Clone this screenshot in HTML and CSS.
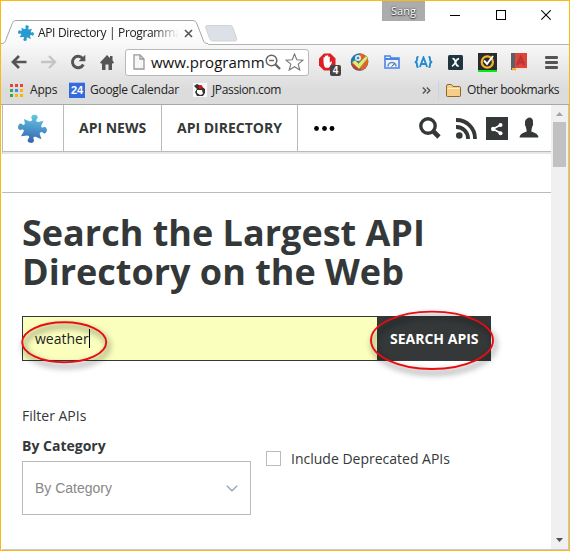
FILE: index.html
```html
<!DOCTYPE html>
<html lang="en">
<head>
<meta charset="utf-8">
<title>API Directory | ProgrammableWeb</title>
<link rel="stylesheet" href="styles.css">
</head>
<body>
<svg width="0" height="0" class="defs">
  <defs>
    <linearGradient id="pz" x1="0" y1="0" x2="0" y2="1"><stop offset="0" stop-color="#63c8e4"/><stop offset="1" stop-color="#3562b0"/></linearGradient>
    <linearGradient id="tabfill" x1="0" y1="0" x2="0" y2="1"><stop offset="0" stop-color="#fff"/><stop offset="1" stop-color="#f9f9f9"/></linearGradient>
    <symbol id="puzzle" viewBox="0 0 28 28"><path transform="rotate(8 14 14)" d="M4.500 6L10 7.500Q13 7.500 12.500 5.500C10.500 3.500 11 .5 14.500 .5C18 .5 18 3.500 16.500 5Q16 7 18.500 7L23.500 5L22 10Q22 12.500 24 11.500C26 10 28 11.500 28 14C28 17 25.500 18 24 16.300Q22 15.500 21.500 18L24 23L18 21.500Q15.500 21.500 16.300 23.500C18 26 16.500 28 14 28C11 28 10 25.500 11.800 23.500Q12.500 21.500 10 21.500L4 23L6 18Q6 15.500 4 16.500C2 18 0 17 0 14C0 11 2.500 10 4 11.500Q6 12.500 6 10Z" fill="url(#pz)"/></symbol>
    <symbol id="puzzle-small" viewBox="0 0 28 28"><path transform="rotate(8 14 14)" d="M4.500 6L10 7.500Q13 7.500 12.500 5.500C10.500 3.500 11 .5 14.500 .5C18 .5 18 3.500 16.500 5Q16 7 18.500 7L23.500 5L22 10Q22 12.500 24 11.500C26 10 28 11.500 28 14C28 17 25.500 18 24 16.300Q22 15.500 21.500 18L24 23L18 21.500Q15.500 21.500 16.300 23.500C18 26 16.500 28 14 28C11 28 10 25.500 11.800 23.500Q12.500 21.500 10 21.500L4 23L6 18Q6 15.500 4 16.500C2 18 0 17 0 14C0 11 2.500 10 4 11.500Q6 12.500 6 10Z" fill="#259bd0"/></symbol>
  </defs>
</svg>
<div class="window">
  <header class="titlebar">
    <div class="tab">
      <svg class="tab-shape" width="208" height="25" viewBox="0 0 208 25"><path d="M0 23.500 C4 23.500 4 22 5 19.500 L11 4 C12 1 13 .5 16 .5 H191 C194 .5 195 1.500 196 4 L202 19.500 C203 22.500 204 23.500 207 23.500 V25 H0Z" fill="url(#tabfill)"/><path d="M0 23.500 C4 23.500 4 22 5 19.500 L11 4 C12 1 13 .5 16 .5 H191 C194 .5 195 1.500 196 4 L202 19.500 C203 22.500 204 23.500 207 23.500" fill="none" stroke="#a5a5a5"/></svg>
      <svg class="favicon" width="16" height="16"><use href="#puzzle-small"/></svg>
      <span class="tab-title">API Directory | Programma</span>
      <svg class="tab-close" width="9" height="9" viewBox="0 0 9 9"><path d="M1 1 L8 8 M8 1 L1 8" stroke="#555" stroke-width="1.600"/></svg>
    </div>
    <svg class="newtab" width="33" height="17" viewBox="0 0 33 17"><path d="M3 .5 H25 C27 .5 27.500 1.500 28 3 L31.500 13 C32 15 31.500 16 29.500 16 H8 C6 16 5 15 4.500 13 L.8 3 C.3 1 1 .5 3 .5Z" fill="#dce1e8" stroke="#d0d3d8"/></svg>
    <span class="profile">Sang</span>
    <div class="controls">
      <svg width="10" height="11" viewBox="0 0 10 11"><path d="M0 5.500H10" stroke="#000"/></svg>
      <svg width="10" height="11" viewBox="0 0 10 11"><rect x=".5" y=".5" width="9" height="9" fill="none" stroke="#000"/></svg>
      <svg width="10" height="11" viewBox="0 0 10 11"><path d="M.3 .3L9.700 9.700M9.700 .3L.3 9.700" stroke="#000" stroke-width="1.100"/></svg>
    </div>
  </header>
  <section class="chrome">
    <div class="toolbar">
      <svg class="back" width="16" height="14" viewBox="0 0 16 14"><path d="M15.500 7H2.500M8 1L2 7L8 13" fill="none" stroke="#555" stroke-width="2.700"/></svg>
      <svg class="fwd" width="16" height="14" viewBox="0 0 16 14"><path d="M0 7H13.500M8 1L14 7L8 13" fill="none" stroke="#c4c4c4" stroke-width="2.300"/></svg>
      <svg class="reload" width="16" height="16" viewBox="0 0 16 16"><path d="M12.500 4.300A5.700 5.700 0 1 0 13.300 10.500" fill="none" stroke="#555" stroke-width="2.900"/><path d="M15.300 .8V7.300H8.500Z" fill="#555"/></svg>
      <svg class="home" width="14" height="15" viewBox="0 0 14 15"><path d="M7 0L10 3V1H12.500V5.500L14 7.500L13 8.500H12V15H8.500V9.500H5.500V15H2V8.500H1L0 7.500Z" fill="#555"/></svg>
      <div class="omnibox">
        <svg width="12" height="16" viewBox="0 0 12 16"><path d="M1 .8H7L11 5V15H1Z M7 1V5H11" fill="#f6f6f6" stroke="#999" stroke-width="1.300"/></svg>
        <span class="url">www.programm</span>
        <svg class="zoomout" width="16" height="16" viewBox="0 0 16 16"><circle cx="6.500" cy="6.500" r="5.300" fill="none" stroke="#666" stroke-width="1.500"/><path d="M4 6.500H9" stroke="#666" stroke-width="1.400"/><path d="M10.500 10.500L15 15" stroke="#666" stroke-width="2.400"/></svg>
        <svg class="star" width="19" height="18" viewBox="0 0 19 18"><path d="M9.500 1L11.800 6.800L18 7.200L13.200 11.100L14.800 17L9.500 13.700L4.200 17L5.800 11.100L1 7.200L7.200 6.800Z" fill="#fff" stroke="#777" stroke-width="1.100"/></svg>
      </div>
      <div class="ext hand">
        <svg width="19" height="18" viewBox="0 0 19 18"><path d="M6 .5H12.500L17.500 5.500V12.500L12.500 17.500H6L1 12.500V5.500Z" fill="#e11d24"/><path d="M5.500 8V4.500Q6.200 3.700 7 4.500V8V3Q7.800 2.200 8.600 3V8V2.500Q9.400 1.800 10.200 2.500V8V4Q11 3.200 11.800 4V10Q13 8 14.200 8.800Q13 13 10.800 14.800H7.500Q5.500 13 5.500 8Z" fill="#fff"/></svg>
        <span class="badge">4</span>
      </div>
      <svg class="check" width="20" height="18" viewBox="0 0 20 18"><circle cx="9.500" cy="9" r="8.800" fill="#2577b0"/><path d="M9.500 .2A8.800 8.800 0 0 1 18.300 9Q17 16 11 17.600L9 9Z" fill="#e86023"/><path d="M1 11Q4 18 11 17.500L5 9Z" fill="#c9382a"/><circle cx="8" cy="5" r="3" fill="#d5eefa"/><circle cx="8" cy="5" r="1.300" fill="#3d88ba"/><path d="M2 9.500L5 7L8.500 10.500L16 3L18 5L9 16Z" fill="#dceb7c" stroke="#8ea445" stroke-width=".7"/></svg>
      <svg class="gauge" width="16" height="14" viewBox="0 0 16 14"><path d="M1 13V1H6L7 3H15V13Z" fill="#edf4ff" stroke="#4a85e5" stroke-width="1.600"/><path d="M1 4H15" stroke="#4a85e5" stroke-width="2"/><path d="M4 11.500A4 4 0 0 1 12 11.500" fill="none" stroke="#7890b0" stroke-width="1.700"/><path d="M7.500 11.500L11 8.500" stroke="#294d80"/></svg>
      <svg class="angle" width="19" height="12" viewBox="0 0 19 12"><path d="M4.500 .8Q3 .8 3 2.500V4Q3 5.500 1 6Q3 6.500 3 8V9.500Q3 11.200 4.500 11.200M14.500 .8Q16 .8 16 2.500V4Q16 5.500 18 6Q16 6.500 16 8V9.500Q16 11.200 14.500 11.200M5.900 11L9.500 1.500L13.100 11M7 8H12" fill="none" stroke="#248bd0" stroke-width="1.900"/></svg>
      <svg class="xext" width="15" height="15" viewBox="0 0 15 15"><rect width="15" height="15" rx="1.500" fill="#213442"/><path d="M4.500 3.700Q6.500 3.200 7.500 7Q8.300 11.300 10.800 11M11 3.700Q9 4 7.500 7Q6 10.500 4 11.300" fill="none" stroke="#fff" stroke-width="1.700"/></svg>
      <svg class="norton" width="19" height="19" viewBox="0 0 19 19"><path fill="#2b2b2b" d="M0 0H19V17H0Z"/><path fill="#00ef13" d="M0 17H19V19H0Z"/><circle cx="9.300" cy="9" r="5.600" fill="none" stroke="#f7b52f" stroke-width="2.200"/><path d="M6 7.500L9 11L15 3" fill="none" stroke="#fff" stroke-width="2"/></svg>
      <svg class="book" width="17" height="18" viewBox="0 0 17 18"><path d="M0 0H16V16H0Z" fill="#dc453b"/><path d="M0 0H4V17H0Z" fill="#5c6066"/><path d="M6 12L9.700 4L13.300 12M7.500 9.500H12" fill="none" stroke="#b93430" stroke-width="2"/><path d="M4 15H16V17H4Z" fill="#efddd6"/><path d="M1 15H5V18L3 16.500L1 18Z" fill="#f8b62c"/></svg>
      <svg class="menu" width="13" height="13" viewBox="0 0 13 13"><path d="M1.300 1.500H11.700M1.300 6.500H11.700M1.300 11.500H11.700" stroke="#555" stroke-width="2.900" stroke-linecap="round"/></svg>
    </div>
    <div class="bookmarks">
      <svg class="apps" width="13" height="13" viewBox="0 0 13 13"><path d="M0 0h3v3H0zM5 0h3v3H5zM10 0h3v3h-3z" fill="#ea4335"/><path d="M0 5h3v3H0zM0 10h3v3H0z" fill="#34a853"/><path d="M5 5h3v3H5z" fill="#4285f4"/><path d="M10 5h3v3h-3zM5 10h3v3H5zM10 10h3v3h-3z" fill="#fbb605"/></svg>
      <span class="bm-apps">Apps</span>
      <span class="calendar">24</span>
      <span class="bm-cal">Google Calendar</span>
      <svg class="duke" width="14" height="14" viewBox="0 0 14 14"><path fill="#fafafa" d="M0 0H14V14H0Z"/><path d="M1 3L4 1L8 3L12 6V10L10 13H4L2 9L4 6Z" fill="#333"/><path d="M4 7H9L10 11L7 12L4 10Z" fill="#fff"/><circle cx="7.500" cy="4" r="2.100" fill="#dc1111"/></svg>
      <span class="bm-jp">JPassion.com</span>
      <svg class="more" width="9" height="7" viewBox="0 0 9 7"><path d="M.8 .5L3.800 3.500L.8 6.500M4.800 .5L7.800 3.500L4.800 6.500" fill="none" stroke="#555" stroke-width="1.400"/></svg>
      <i class="sep"></i>
      <svg class="folder" width="15" height="13" viewBox="0 0 15 13"><path d="M.5 12V2Q.5 .5 2 .5H5.500L7 2.500H13.500Q14.500 2.500 14.500 4V12Q14.500 12.500 13.500 12.500H1.500Q.5 12.500 .5 12Z" fill="#f7ce86" stroke="#926536"/><path d="M1.500 4.500H13.500" stroke="#fff0c7"/></svg>
      <span class="bm-other">Other bookmarks</span>
    </div>
  </section>
  <div class="viewport">
    <main class="page">
      <nav class="nav">
        <a class="logo"><svg width="29" height="29"><use href="#puzzle"/></svg></a>
        <a class="news"><span>API NEWS</span></a>
        <a class="directory"><span>API DIRECTORY</span></a>
        <a class="dots"><svg width="21" height="5" viewBox="0 0 21 5"><circle cx="2.500" cy="2.500" r="2.400"/><circle cx="10.500" cy="2.500" r="2.400"/><circle cx="18" cy="2.500" r="2.400"/></svg></a>
        <div class="tools">
          <svg class="t-search" width="22" height="22" viewBox="0 0 22 22"><circle cx="9" cy="9" r="7.200" fill="none" stroke="#343838" stroke-width="3.400"/><path d="M14 14L20 20" stroke="#343838" stroke-width="4.600"/></svg>
          <svg class="t-rss" width="21" height="21" viewBox="0 0 21 21"><circle cx="3.300" cy="17.500" r="3.300" fill="#343838"/><path d="M0 9A11.500 11.500 0 0 1 12 21M0 2A18.500 18.500 0 0 1 19 21" fill="none" stroke="#343838" stroke-width="3.800"/></svg>
          <svg class="t-share" width="22" height="23" viewBox="0 0 22 23"><path fill="#343838" d="M0 0H22V23H0Z"/><path d="M14.500 8L7 12L14.500 16" fill="none" stroke="#fff" stroke-width="1.700"/><g fill="#fff"><circle cx="14.500" cy="8" r="2"/><circle cx="7.200" cy="12" r="2.200"/><circle cx="14.500" cy="16.300" r="2"/></g></svg>
          <svg class="t-user" width="20" height="21" viewBox="0 0 20 21"><path d="M10 .5Q14.500 .5 14 6Q14.500 8 13.300 9.500Q12.500 12 12.300 14.500Q19.500 16.500 19.500 20.500H.5Q.5 16.500 7.700 14.500Q7.500 12 6.700 9.500Q5.500 8 6 6Q5.500 2 10 .5Z" fill="#343838"/></svg>
        </div>
      </nav>
      <div class="subnav"></div>
      <section class="content">
        <h1>Search the Largest API<br>Directory on the Web</h1>
        <form class="search">
          <div class="field"><span class="typed">weather</span><i class="caret"></i></div>
          <div class="submit"><span>SEARCH APIS</span></div>
          <svg class="rings" width="520" height="100" viewBox="0 0 520 100"><g fill="none" stroke="#e90d12" stroke-width="1.900"><ellipse cx="64.200" cy="42.300" rx="42" ry="20"/><ellipse cx="432" cy="40.300" rx="61" ry="28.700"/></g></svg>
        </form>
        <p class="filter"><span>Filter APIs</span></p>
        <div class="filters">
          <div class="category">
            <label><span>By Category</span></label>
            <div class="select"><span>By Category</span><svg width="12" height="7" viewBox="0 0 12 7"><path d="M.8 .8L6 5.800L11.200 .8" fill="none" stroke="#8fa3b5" stroke-width="1.200"/></svg></div>
          </div>
          <div class="deprecated"><i class="box"></i><span>Include Deprecated APIs</span></div>
        </div>
      </section>
    </main>
    <aside class="scrollbar">
      <svg width="7" height="4" viewBox="0 0 7 4"><path d="M0 4L3.500 0L7 4Z" fill="#a3a3a3"/></svg>
      <div class="thumb"></div>
      <svg class="down" width="7" height="4" viewBox="0 0 7 4"><path d="M0 0L3.500 4L7 0Z" fill="#505050"/></svg>
    </aside>
  </div>
</div>
</body>
</html>
```

FILE: styles.css
```css
* { box-sizing: border-box; }
body { margin: 0; background: #fff; font-family: "Open Sans", sans-serif; color: #343838; overflow: hidden; }
svg { display: block; flex: none; }
span { white-space: nowrap; }
.defs { position: absolute; }
.window { width: 570px; height: 551px; border: 1px solid #fdb813; display: flex; flex-direction: column; }

.titlebar { height: 43px; display: flex; align-items: flex-start; flex: none; }
.tab { position: relative; width: 205px; height: 24px; margin-top: 19px; display: flex; align-items: center; padding-left: 17px; z-index: 1; }
.tab-shape { position: absolute; left: 0; top: 0; }
.favicon, .tab-title, .tab-close { position: relative; top: 1px; }
.tab-title { margin-left: 4px; width: 146px; font: 12px/18px "Open Sans"; color: #222; letter-spacing: -.35px; -webkit-mask-image: linear-gradient(90deg, #000 115px, transparent 141px); }
.tab-close { margin-left: 0; }
.newtab { margin-top: 24px; margin-left: -1px; }
.profile { margin-left: 144px; width: 43px; height: 20px; background: #acacac; color: #fff; font: 11px/20px "Open Sans"; text-align: center; text-shadow: 0 0 2px #333, 0 1px 1px #444; }
.controls { display: flex; gap: 35.500px; margin: 9px 0 0 25px; }

.chrome { height: 61px; flex: none; border-top: 1px solid #b2b2b2; border-bottom: 1px solid #a8a8a8; background: linear-gradient(#f8f8f8, #dcdcdc 75%); }
.toolbar { height: 34px; display: flex; align-items: center; padding-left: 10px; }
.fwd { margin-left: 14px; }
.reload { margin-left: 13px; }
.home { margin-left: 14px; }
.omnibox { width: 184px; height: 27px; margin-left: 11px; border: 1px solid #b9b9b9; border-radius: 3px; background: #fff; display: flex; align-items: center; padding-left: 7px; }
.url { width: 113px; margin-left: 6px; font: 15px/22px "Open Sans"; color: #111; }
.zoomout { margin-left: 1px; }
.star { margin-left: 4px; }
.ext { position: relative; margin-left: 9px; }
.badge { position: absolute; left: 12px; top: 12px; width: 11px; height: 11px; border-radius: 2px; background: #444; color: #fff; font: bold 10px/11px "Liberation Sans"; text-align: center; }
.check { margin-left: 13px; }
.gauge { margin-left: 14px; }
.angle { margin-left: 14px; }
.xext { margin-left: 15px; }
.norton { margin-left: 15px; }
.book { margin-left: 14px; }
.menu { margin-left: 17px; }

.bookmarks { height: 20px; margin-top: 1px; display: flex; align-items: center; padding-left: 9px; font: 12px/18px "Open Sans"; color: #222; }
.bm-apps { width: 27px; margin-left: 7px; letter-spacing: -.2px; }
.calendar { width: 16px; height: 16px; margin-left: 12px; background: #346adb; color: #fff; font: bold 11px/15px "Liberation Sans"; text-align: center; border-top: 1px solid #a7bfe9; }
.bm-cal { width: 90px; margin-left: 5px; letter-spacing: -.27px; }
.duke { margin-left: 13px; }
.bm-jp { width: 70px; margin-left: 5px; letter-spacing: -.36px; }
.more { margin-left: 140px; }
.sep { width: 1px; height: 19px; background: #c6d4df; margin-left: 7px; }
.folder { margin-left: 7px; }
.bm-other { margin-left: 6px; letter-spacing: -.43px; }

.viewport { flex: 1; display: flex; margin-left: 1px; border-right: 1px solid #c0c8d2; border-bottom: 1px solid #c5cbd2; }
.page { width: 549px; }
.nav { height: 49px; display: flex; border-bottom: 2px solid #e7e7e7; box-shadow: inset 0 -1px #bbb; border-left: 1px solid #bbb; }
.nav a { display: flex; align-items: center; border-right: 1px solid #bbb; height: 46px; font: bold 14px/20px "Open Sans"; }
.logo { width: 61px; padding-left: 15px; }
.news { width: 98px; padding-left: 15px; }
.directory { width: 136px; padding-left: 15px; }
.nav .dots { width: 38px; padding-left: 16px; border-right: 0; }
.tools { display: flex; align-items: flex-start; margin-left: 83px; padding-top: 12px; }
.t-rss { margin: 1px 0 0 15px; }
.t-share { margin-left: 9px; }
.t-user { margin-left: 11px; }
.subnav { height: 39px; border-bottom: 1px solid #bbb; }
.content { padding: 20px 0 0 20px; }
h1 { margin: 0; font: bold 36px/39px "Open Sans"; }
.search { position: relative; display: flex; width: 469px; height: 45px; margin: 25px 0 0; }
.field { width: 355px; border: 1px solid #343838; border-right: 0; background: #faffbd; padding-left: 12px; display: flex; align-items: center; font: 14px/20px "Open Sans"; color: #222; }
.caret { width: 1px; height: 19px; background: #000; }
.submit { width: 114px; background: #343838; color: #fff; font: bold 14px/20px "Open Sans"; padding: 13px 0 0 13px; }
.rings { position: absolute; left: -22px; top: -16px; filter: drop-shadow(2px 4px 3px rgba(0,0,0,.7)); }
.filter { margin: 45px 0 0; font: 14px/20px "Open Sans"; }
.filters { display: flex; }
.category { width: 229px; padding-top: 10px; }
.category label { display: block; font: bold 14px/20px "Open Sans"; }
.select { margin-top: 5px; height: 54px; border: 1px solid #bbb; display: flex; align-items: center; justify-content: space-between; padding: 0 12px; font: 14px/20px "Liberation Sans"; color: #888; }
.deprecated { display: flex; align-items: center; height: 20px; margin: 22px 0 0 15px; font: 14px/20px "Open Sans"; }
.deprecated span { padding-top: 1px; }
.box { width: 15px; height: 15px; border: 1px solid #bbb; margin-right: 10px; }
.scrollbar { width: 17px; background: #f0f0f0; display: flex; flex-direction: column; align-items: center; padding: 7px 2px; }
.thumb { width: 13px; height: 45px; margin-top: 6px; background: #c1c1c1; }
.down { margin-top: auto; }
```
